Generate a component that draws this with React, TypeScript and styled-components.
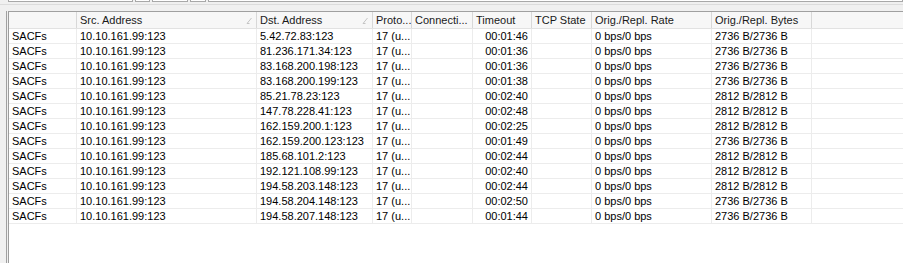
import React from "react";
import styled, { createGlobalStyle } from "styled-components";

const GlobalStyle = createGlobalStyle`
  html, body {
    margin: 0;
    padding: 0;
    background: #f0f0f0;
  }
  body {
    font-family: "Liberation Sans", Arial, sans-serif;
    font-size: 11px;
    color: #000;
  }
`;

const Window = styled.div`
  width: 903px;
  height: 263px;
  overflow: hidden;
  display: flex;
  flex-direction: column;
  background: #f0f0f0;
`;

const Toolbar = styled.div`
  height: 4px;
  overflow: hidden;
  display: flex;
  align-items: flex-end;
  gap: 2px;
  padding-left: 8px;
  border-bottom: 1px solid #dcdcdc;
`;

const ToolBox = styled.div<{ $w?: number; $grow?: boolean }>`
  height: 20px;
  margin-bottom: 2px;
  width: ${(p) => (p.$w ? `${p.$w}px` : "auto")};
  flex: ${(p) => (p.$grow ? 1 : "none")};
  background: #fff;
  border: 1px solid #a8a8a8;
  box-sizing: border-box;
  margin-right: ${(p) => (p.$grow ? 0 : 0)}px;
`;

const Body = styled.div`
  flex: 1;
  display: flex;
  padding: 6px 0 0 6px;
  min-height: 0;
`;

const Frame = styled.div`
  flex: 1;
  display: flex;
  border-left: 1px solid #a0a0a0;
  padding-left: 1px;
  min-width: 0;
`;

const Table = styled.div`
  flex: 1;
  background: #fff;
  border-left: 1px solid #9c9c9c;
  border-top: 1px solid #a0a0a0;
  display: flex;
  flex-direction: column;
  min-width: 0;
`;

const cols = "68px 180px 116px 39px 61px 59px 60px 120px 100px 1fr";

const HeaderRow = styled.div`
  display: grid;
  grid-template-columns: ${cols};
  height: 16px;
  background: #f7f7f7;
  border-bottom: 1px solid #e2e2e2;
`;

const HeadCell = styled.div<{ $last?: boolean }>`
  display: flex;
  align-items: center;
  justify-content: space-between;
  padding: 0 3px;
  border-right: ${(p) => (p.$last ? "none" : "1px solid #d8d8d8")};
  color: #1a1a1a;
  white-space: nowrap;
  overflow: hidden;
`;

const Row = styled.div`
  display: grid;
  grid-template-columns: ${cols};
  height: 14px;
  border-bottom: 1px solid #ececec;
`;

const Cell = styled.div<{ $right?: boolean; $last?: boolean }>`
  display: flex;
  align-items: center;
  justify-content: ${(p) => (p.$right ? "flex-end" : "flex-start")};
  padding: 0 3px;
  border-right: ${(p) => (p.$last ? "none" : "1px solid #ececec")};
  white-space: nowrap;
  overflow: hidden;
`;

const SortMark = () => (
  <svg width="7" height="7" viewBox="0 0 7 7">
    <path d="M1 6.5 L5.5 1 M1 6.5 H3.5" stroke="#c4c4c4" strokeWidth="1" fill="none" />
  </svg>
);

type Conn = { dst: string; timeout: string; bytes: string };

const rows: Conn[] = [
  { dst: "5.42.72.83:123", timeout: "00:01:46", bytes: "2736 B/2736 B" },
  { dst: "81.236.171.34:123", timeout: "00:01:36", bytes: "2736 B/2736 B" },
  { dst: "83.168.200.198:123", timeout: "00:01:36", bytes: "2736 B/2736 B" },
  { dst: "83.168.200.199:123", timeout: "00:01:38", bytes: "2736 B/2736 B" },
  { dst: "85.21.78.23:123", timeout: "00:02:40", bytes: "2812 B/2812 B" },
  { dst: "147.78.228.41:123", timeout: "00:02:48", bytes: "2812 B/2812 B" },
  { dst: "162.159.200.1:123", timeout: "00:02:25", bytes: "2812 B/2812 B" },
  { dst: "162.159.200.123:123", timeout: "00:01:49", bytes: "2736 B/2736 B" },
  { dst: "185.68.101.2:123", timeout: "00:02:44", bytes: "2812 B/2812 B" },
  { dst: "192.121.108.99:123", timeout: "00:02:40", bytes: "2812 B/2812 B" },
  { dst: "194.58.203.148:123", timeout: "00:02:44", bytes: "2812 B/2812 B" },
  { dst: "194.58.204.148:123", timeout: "00:02:50", bytes: "2736 B/2736 B" },
  { dst: "194.58.207.148:123", timeout: "00:01:44", bytes: "2736 B/2736 B" },
];

const App: React.FC = () => {
  return (
    <Window>
      <GlobalStyle />
      <Toolbar>
        <ToolBox $w={125} />
        <ToolBox $w={15} />
        <ToolBox $w={36} />
        <ToolBox $w={16} />
        <ToolBox $grow />
      </Toolbar>
      <Body>
        <Frame>
          <Table>
            <HeaderRow>
              <HeadCell />
              <HeadCell>
                Src. Address <SortMark />
              </HeadCell>
              <HeadCell>
                Dst. Address <SortMark />
              </HeadCell>
              <HeadCell>Proto...</HeadCell>
              <HeadCell>Connecti...</HeadCell>
              <HeadCell>Timeout</HeadCell>
              <HeadCell>TCP State</HeadCell>
              <HeadCell>Orig./Repl. Rate</HeadCell>
              <HeadCell>Orig./Repl. Bytes</HeadCell>
              <HeadCell $last />
            </HeaderRow>
            {rows.map((r, i) => (
              <Row key={r.dst + i}>
                <Cell>SACFs</Cell>
                <Cell>10.10.161.99:123</Cell>
                <Cell>{r.dst}</Cell>
                <Cell>17 (u...</Cell>
                <Cell />
                <Cell $right>{r.timeout}</Cell>
                <Cell />
                <Cell>0 bps/0 bps</Cell>
                <Cell>{r.bytes}</Cell>
                <Cell $last />
              </Row>
            ))}
          </Table>
        </Frame>
      </Body>
    </Window>
  );
};

export default App;
